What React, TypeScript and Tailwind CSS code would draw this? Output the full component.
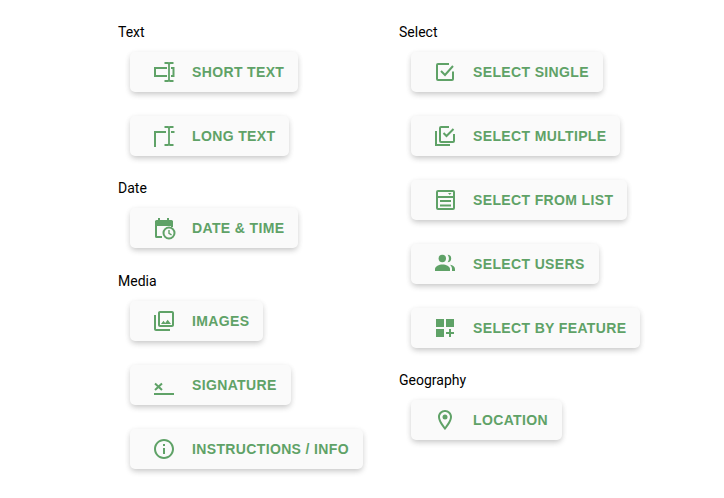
import { ReactNode } from "react";
import { MdDashboardCustomize, MdInfoOutline, MdOutlineLocationOn, MdOutlinePhotoLibrary } from "react-icons/md";

const Svg = ({ children }: { children: ReactNode }) => (
  <svg width="24" height="24" viewBox="0 0 24 24" fill="none" stroke="currentColor" strokeWidth="2">
    {children}
  </svg>
);

const ShortTextIcon = () => (
  <Svg>
    <path d="M15 8H3v8h12" />
    <path d="M12.500 3h3.500l1 1 1-1h3.500M12.500 21h3.500l1-1 1 1h3.500M17 4v16" strokeWidth="1.800" />
    <path d="M19 8h2.500v8H19" />
  </Svg>
);

const LongTextIcon = () => (
  <Svg>
    <path d="M3 23V8h11" />
    <path d="M12.500 3h3.500l1 1 1-1h3.500M12.500 21h3.500l1-1 1 1h3.500M17 4v16" strokeWidth="1.800" />
    <path d="M19 8h3.500" />
  </Svg>
);

const DateIcon = () => (
  <svg width="24" height="24" viewBox="0 0 24 24" fill="currentColor">
    <path d="M6 2h2v2h7V2h2v2h2.500A1.500 1.500 0 0 1 21 5.500V11h-2V10H5v10h5v2H4.500A1.500 1.500 0 0 1 3 20.500v-15A1.500 1.500 0 0 1 4.500 4H6z" />
    <path d="M3 5h18v4H3z" />
    <path fillRule="evenodd" d="M17 10.500a6.500 6.500 0 1 1 0 13 6.500 6.500 0 0 1 0-13zm0 2a4.500 4.500 0 1 0 0 9 4.500 4.500 0 0 0 0-9z" />
    <path d="M16.300 14h1.400v3l2.200 1.300-.7 1.100-2.900-1.700z" />
  </svg>
);

const SignatureIcon = () => (
  <Svg>
    <path d="M2 21h20" />
    <path d="M3 10.500l7 6.500M10 10.500l-7 6.500" />
  </Svg>
);

const SingleIcon = () => (
  <Svg>
    <path d="M20 11.500V19a1 1 0 0 1-1 1H5a1 1 0 0 1-1-1V5a1 1 0 0 1 1-1h11" />
    <path d="M8 11l4 4 8-9" />
  </Svg>
);

const MultipleIcon = () => (
  <Svg>
    <path d="M3 7v14h14" />
    <path d="M21 10v7a1 1 0 0 1-1 1H8a1 1 0 0 1-1-1V4a1 1 0 0 1 1-1h8" />
    <path d="M10.500 9l3 3 7-7" />
  </Svg>
);

const ListIcon = () => (
  <Svg>
    <rect x="4" y="3" width="17" height="18" rx="1" />
    <path d="M4 9h17M7 13h11M7 17.500h11" />
    <path d="M15 5h3.500l-1.750 2z" fill="currentColor" stroke="none" />
  </Svg>
);

const UsersIcon = () => (
  <svg width="24" height="24" viewBox="0 0 24 24" fill="currentColor">
    <circle cx="9.300" cy="6.500" r="3.700" />
    <path d="M14.500 2.800a3.700 3.700 0 1 1 0 7.400c.9-1 1.400-2.300 1.400-3.700s-.5-2.700-1.400-3.700z" />
    <path d="M2 19v-2c0-2.700 4-4.500 7.500-4.500s7.500 1.800 7.500 4.500v2z" />
    <path d="M17 12.800c3 .4 5 1.900 5 4.200v2h-3v-2c0-1.700-.7-3-2-4.200z" />
  </svg>
);

const sections: { title: string; items: { label: string; icon: ReactNode }[] }[][] = [
  [
    {
      title: "Text",
      items: [
        { label: "Short Text", icon: <ShortTextIcon /> },
        { label: "Long Text", icon: <LongTextIcon /> },
      ],
    },
    { title: "Date", items: [{ label: "Date & Time", icon: <DateIcon /> }] },
    {
      title: "Media",
      items: [
        { label: "Images", icon: <MdOutlinePhotoLibrary size={26} /> },
        { label: "Signature", icon: <SignatureIcon /> },
        { label: "Instructions / Info", icon: <MdInfoOutline size={24} /> },
      ],
    },
  ],
  [
    {
      title: "Select",
      items: [
        { label: "Select Single", icon: <SingleIcon /> },
        { label: "Select Multiple", icon: <MultipleIcon /> },
        { label: "Select From List", icon: <ListIcon /> },
        { label: "Select Users", icon: <UsersIcon /> },
        { label: "Select By Feature", icon: <MdDashboardCustomize size={24} /> },
      ],
    },
    { title: "Geography", items: [{ label: "Location", icon: <MdOutlineLocationOn size={24} /> }] },
  ],
];

function FieldButton({ label, icon }: { label: string; icon: ReactNode }) {
  return (
    <button className="flex h-10 w-fit items-center gap-4 rounded-[5px] bg-[#fafafa] pl-[22px] pr-[14px] font-['Liberation_Sans',sans-serif] text-[14px] font-bold uppercase tracking-[0.36px] text-[#5fa267] shadow-[0_3px_6px_-1px_rgba(0,0,0,0.2),0_1px_6px_rgba(0,0,0,0.06)]">
      <span className="flex h-6 w-6 items-center justify-center">{icon}</span>
      {label}
    </button>
  );
}

export default function App() {
  return (
    <div className="flex h-[498px] w-[724px] bg-white pl-[118px] pt-5 font-['Roboto',sans-serif] text-black">
      {sections.map((column) => (
        <div key={column[0].title} className="flex w-[281px] flex-col gap-5">
          {column.map((section) => (
            <div key={section.title} className={section.title === "Media" ? "mt-px" : ""}>
              <p className="mb-2 h-6 text-[14px] leading-6">{section.title}</p>
              <div className="flex flex-col gap-6 pl-3">
                {section.items.map((item) => (
                  <FieldButton key={item.label} {...item} />
                ))}
              </div>
            </div>
          ))}
        </div>
      ))}
    </div>
  );
}
